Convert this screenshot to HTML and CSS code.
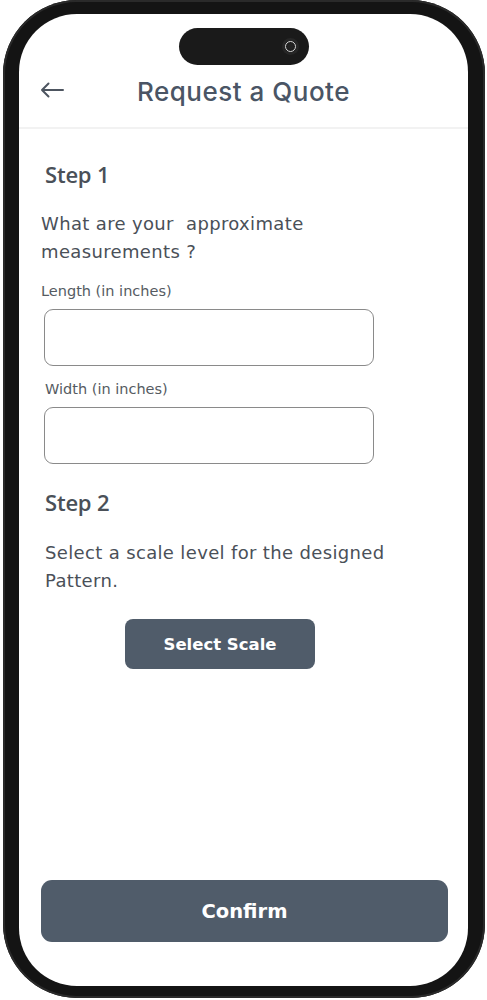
FILE: index.html
```html
<!DOCTYPE html>
<html>
<head>
<meta charset="utf-8">
<link rel="stylesheet" href="styles.css">
</head>
<body>
<div class="phone">
  <div class="screen">
    <header class="header">
      <div class="island"><span class="camera"></span></div>
      <div class="title-row">
        <svg class="back" width="24" height="16" viewBox="0 0 24 16" fill="none" stroke="#4d5560" stroke-width="2" stroke-linecap="round" stroke-linejoin="round">
          <path d="M23 8H2M8.5 1.5L2 8l6.5 6.5"/>
        </svg>
        <h1 class="title">Request a Quote</h1>
      </div>
    </header>
    <main class="content">
      <h2 class="step">Step 1</h2>
      <p class="question">What are your&nbsp; approximate<br>measurements ?</p>
      <label class="label">Length (in inches)</label>
      <div class="input"></div>
      <label class="label label-width">Width (in inches)</label>
      <div class="input"></div>
      <h2 class="step step2">Step 2</h2>
      <p class="question q2">Select a scale level for the designed<br>Pattern.</p>
      <div class="scale-wrap"><button class="btn scale">Select Scale</button></div>
      <div class="spacer"></div>
      <button class="btn confirm">Confirm</button>
    </main>
  </div>
</div>
</body>
</html>
```

FILE: styles.css
```css
* { box-sizing: border-box; }
html, body { margin: 0; padding: 0; background: #fff; }
body { width: 487px; height: 1000px; overflow: hidden; font-family: "DejaVu Sans", "Open Sans", sans-serif; }

.phone {
  margin-left: 3px;
  width: 482px;
  height: 998px;
  background: #141414;
  border-radius: 74px;
  padding: 14px 17px 12px 16px;
  box-shadow: inset 0 0 0 2px #2a2a2a;
}
.screen {
  width: 100%;
  height: 100%;
  background: #fff;
  border-radius: 58px;
  display: flex;
  flex-direction: column;
  overflow: hidden;
}
.header {
  height: 115px;
  border-bottom: 2px solid #f2f2f2;
  display: flex;
  flex-direction: column;
  align-items: center;
}
.island {
  margin-top: 14px;
  width: 130px;
  height: 37px;
  border-radius: 19px;
  background: #1a1a1a;
  display: flex;
  justify-content: flex-end;
  align-items: center;
  padding-right: 13px;
}
.camera {
  width: 11px;
  height: 11px;
  border-radius: 50%;
  border: 1px solid #d8d8d8;
  background: radial-gradient(circle, #222 40%, #111 100%);
  box-shadow: 0 0 0 3px #262626;
}
.title-row {
  width: 100%;
  flex: 1;
  display: flex;
  align-items: center;
  justify-content: center;
  position: relative;
  padding-bottom: 10px;
}
.back { position: absolute; left: 21px; top: 17px; }
.title {
  margin: 0;
  font-family: "Inter", sans-serif;
  font-weight: 500;
  font-size: 26px;
  color: #4a5565;
  letter-spacing: 0.5px;
}
.content {
  flex: 1;
  display: flex;
  flex-direction: column;
  padding: 0 21px 44px 22px;
}
.step {
  margin: 31px 0 0 4px;
  font-family: "Open Sans", sans-serif;
  font-size: 22px;
  font-weight: 600;
  color: #4a5058;
  line-height: 28px;
  letter-spacing: -0.2px;
}
.step2 { margin-top: 24px; }
.question {
  margin: 22px 0 0 0;
  font-size: 18px;
  line-height: 28px;
  color: #4a5058;
  letter-spacing: 0.35px;
}
.q2 { margin: 23px 0 0 4px; }
.label {
  margin-top: 15px;
  font-size: 14.5px;
  color: #555b62;
  line-height: 20px;
}
.label-width { margin-top: 13px; margin-left: 4px; }
.input {
  margin: 8px 0 0 3px;
  width: 330px;
  height: 57px;
  border: 1.5px solid #8a8a8a;
  border-radius: 9px;
}
.scale-wrap { margin-top: 24px; display: flex; padding-left: 84px; }
.btn {
  border: none;
  background: #505c6a;
  color: #fff;
  font-family: "DejaVu Sans", sans-serif;
  font-weight: 600;
}
.scale {
  width: 190px;
  height: 50px;
  border-radius: 8px;
  font-size: 16.5px;
}
.spacer { flex: 1; }
.confirm {
  width: 407px;
  height: 62px;
  border-radius: 11px;
  font-size: 19.5px;
}
```
